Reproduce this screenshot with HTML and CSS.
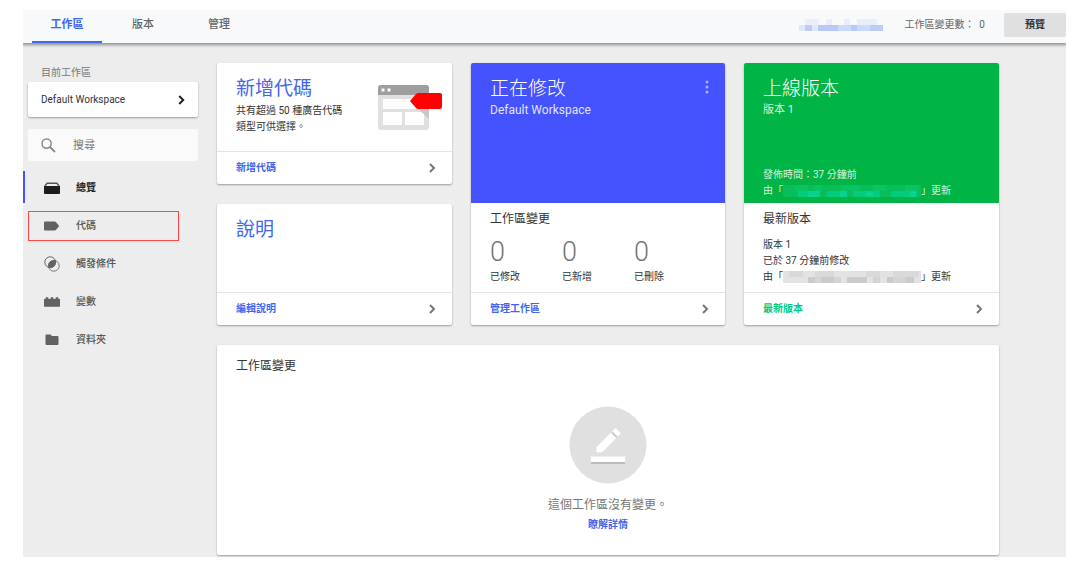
FILE: index.html
```html
<!DOCTYPE html>
<html lang="zh-Hant">
<head>
<meta charset="utf-8">
<meta name="viewport" content="width=device-width, initial-scale=1">
<title>工作區</title>
<link rel="stylesheet" href="styles.css">
</head>
<body>
<div class="app">
  <header class="topbar">
    <nav class="tabs">
      <a class="tab tab-active" href="#">工作區</a>
      <a class="tab" href="#">版本</a>
      <a class="tab" href="#">管理</a>
    </nav>
    <div class="topbar-info">
      <svg class="masked-id" width="86" height="18" viewBox="0 0 86 18" aria-hidden="true" shape-rendering="crispEdges">
        <path fill="#e9eefb" d="M6 3h14v6H6zM27 3h6v6h-6zM45 3h6v6h-6zM58 3h20v6H58z"/>
        <path fill="#dfe7fb" d="M0 9h84v6H0z"/>
        <path fill="#becbf4" d="M6 9h7v6H6zM71 9h13v6H71z"/>
        <path fill="#b9c8fa" d="M19 9h20v6H19zM52 9h6v6h-6z"/>
        <path fill="#c8daff" d="M39 9h13v6H39zM58 9h13v6H58z"/>
      </svg>
      <span class="change-count">工作區變更數：&nbsp; 0</span>
      <button class="preview" type="button">預覽</button>
    </div>
  </header>

  <div class="body">
    <aside class="sidebar">
      <div class="side-label">目前工作區</div>
      <button class="workspace" type="button">
        <span>Default Workspace</span>
        <svg width="7" height="10" viewBox="0 0 7 10" aria-hidden="true"><path d="M1.2 1l4 4-4 4" fill="none" stroke="#222" stroke-width="2"/></svg>
      </button>
      <label class="search">
        <svg width="15" height="15" viewBox="0 0 15 15" aria-hidden="true"><circle cx="5.6" cy="5.6" r="4.6" fill="none" stroke="#8a8a8a" stroke-width="1.5"/><path d="M9 9l5 5" stroke="#8a8a8a" stroke-width="1.8"/></svg>
        <input type="search" placeholder="搜尋" aria-label="搜尋">
      </label>
      <nav class="menu">
        <a class="item item-active" href="#">
          <svg width="16" height="14" viewBox="0 0 16 14" aria-hidden="true"><path d="M0 5h16v7a1 1 0 0 1-1 1H1a1 1 0 0 1-1-1z" fill="#1c1c1c"/><path d="M1 5l2-2.700h10L15 5" fill="none" stroke="#555" stroke-width="1.400"/></svg>
          <span>總覽</span>
        </a>
        <a class="item item-marked" href="#">
          <svg width="16" height="14" viewBox="0 0 16 14" aria-hidden="true"><path d="M1 2.500h9.500a2 2 0 0 1 1.600.8L15.200 7l-3.100 3.700a2 2 0 0 1-1.600.8H1a1 1 0 0 1-1-1v-7a1 1 0 0 1 1-1z" fill="#626262"/></svg>
          <span>代碼</span>
        </a>
        <a class="item" href="#">
          <svg width="16" height="16" viewBox="0 0 16 16" aria-hidden="true"><circle cx="6.200" cy="6.200" r="5.400" fill="none" stroke="#626262"/><circle cx="9.800" cy="9.800" r="5.400" fill="none" stroke="#777"/><path d="M11.500 4.600A5.400 5.400 0 0 0 4.600 11.500 5.400 5.400 0 0 0 11.500 4.600z" fill="#626262"/></svg>
          <span>觸發條件</span>
        </a>
        <a class="item" href="#">
          <svg width="16" height="14" viewBox="0 0 16 14" aria-hidden="true"><path d="M0 4h1.500V3q0-.7.700-.7h1.600q.7 0 .7.700v1h2V3q0-.7.700-.7h1.600q.7 0 .7.700v1h2V3q0-.7.700-.7h1.600q.7 0 .7.700v1H16v7a.7.7 0 0 1-.7.700H.7A.7.700 0 0 1 0 11z" fill="#626262"/></svg>
          <span>變數</span>
        </a>
        <a class="item" href="#">
          <svg width="16" height="14" viewBox="0 0 16 14" aria-hidden="true"><path d="M2.500 1.500h4L8 3h5.500a1 1 0 0 1 1 1v7a1 1 0 0 1-1 1h-11a1 1 0 0 1-1-1V2.500a1 1 0 0 1 1-1z" fill="#626262"/></svg>
          <span>資料夾</span>
        </a>
      </nav>
    </aside>

    <main class="cards">
      <section class="card">
        <div class="card-main with-art">
          <div>
            <h2 class="title">新增代碼</h2>
            <p class="copy">共有超過 50 種廣告代碼<br>類型可供選擇。</p>
          </div>
          <svg class="art" width="64" height="46" viewBox="0 0 64 46" aria-hidden="true">
            <rect y="1" width="51" height="45" rx="3" fill="#e0e0e0"/>
            <path d="M0 11V4a3 3 0 0 1 3-3h45a3 3 0 0 1 3 3v7z" fill="#9e9e9e"/>
            <path d="M3.500 4.500h3v3h-3zM9.500 4.500h3v3h-3zM5 15h41v10H5zM5 28h19v13H5zM27 28h19v13H27z" fill="#fff"/>
            <path d="M38 23l13 12V21z" fill="#c7c7c7"/>
            <path d="M32 17l6-7q1-1 2.500-1H62q2 0 2 2v12q0 2-2 2H40.500q-1.500 0-2.500-1z" fill="#f00"/>
          </svg>
        </div>
        <a class="foot" href="#"><span>新增代碼</span><svg class="chev" width="7" height="10" viewBox="0 0 7 10" aria-hidden="true"><path d="M1 1l4 4-4 4"/></svg></a>
      </section>

      <section class="card tall">
        <div class="banner banner-blue">
          <div>
            <h2 class="title">正在修改</h2>
            <p class="subtitle">Default Workspace</p>
          </div>
          <button class="more" type="button" aria-label="更多">
            <svg width="4" height="14" viewBox="0 0 4 14" aria-hidden="true"><circle cx="2" cy="2" r="1.500"/><circle cx="2" cy="7" r="1.500"/><circle cx="2" cy="12" r="1.500"/></svg>
          </button>
        </div>
        <div class="details">
          <h3 class="heading">工作區變更</h3>
          <dl class="stats">
            <div class="stat"><dt>已修改</dt><dd>0</dd></div>
            <div class="stat"><dt>已新增</dt><dd>0</dd></div>
            <div class="stat"><dt>已刪除</dt><dd>0</dd></div>
          </dl>
        </div>
        <a class="foot" href="#"><span>管理工作區</span><svg class="chev" width="7" height="10" viewBox="0 0 7 10" aria-hidden="true"><path d="M1 1l4 4-4 4"/></svg></a>
      </section>

      <section class="card tall">
        <div class="banner banner-green">
          <div>
            <h2 class="title">上線版本</h2>
            <p class="subtitle">版本 1</p>
          </div>
          <p class="published">發佈時間：37 分鐘前<br>由「<svg class="masked" width="138" height="12" viewBox="0 0 138 12" aria-hidden="true" shape-rendering="crispEdges">
            <path fill="#0abd5b" d="M0 0h138v12H0z"/>
            <path fill="#09c466" d="M12 0h13v6H12zM31 0h7v6h-7zM58 0h19v6H58zM90 0h13v6H90zM122 0h13v6h-13z"/>
            <path fill="#05cb7c" d="M15 6h22v6H15zM44 6h20v6H44zM70 6h27v6H70zM108 6h26v6h-26z"/>
            <path fill="#08d38d" d="M25 6h12v6H25zM57 6h7v6h-7zM83 6h7v6h-7zM127 6h6v6h-6z"/>
          </svg>」更新</p>
        </div>
        <div class="details">
          <h3 class="heading">最新版本</h3>
          <p class="copy latest">版本 1<br>已於 37 分鐘前修改<br>由「<svg class="masked" width="138" height="12" viewBox="0 0 138 12" aria-hidden="true" shape-rendering="crispEdges">
            <path fill="#e3e3e3" d="M0 0h138v12H0z"/>
            <path fill="#d9d9d9" d="M6 0h14v6H6zM32 0h19v6H32zM83 0h14v6H83zM110 0h26v6h-26z"/>
            <path fill="#cbcbcb" d="M25 6h7v6h-7zM38 6h13v6H38zM64 6h20v6H64zM104 6h6v6h-6zM123 6h8v6h-8z"/>
            <path fill="#d4d4d4" d="M32 6h6v6h-6zM51 6h7v6h-7zM90 6h7v6h-7zM110 6h13v6h-13z"/>
          </svg>」更新</p>
        </div>
        <a class="foot foot-green" href="#"><span>最新版本</span><svg class="chev" width="7" height="10" viewBox="0 0 7 10" aria-hidden="true"><path d="M1 1l4 4-4 4"/></svg></a>
      </section>

      <section class="card">
        <div class="card-main"><h2 class="title">說明</h2></div>
        <a class="foot" href="#"><span>編輯說明</span><svg class="chev" width="7" height="10" viewBox="0 0 7 10" aria-hidden="true"><path d="M1 1l4 4-4 4"/></svg></a>
      </section>

      <section class="card wide">
        <h3 class="heading">工作區變更</h3>
        <div class="empty">
          <svg width="78" height="78" viewBox="0 0 78 78" aria-hidden="true">
            <circle cx="39" cy="39" r="38.500" fill="#e0e0e0"/>
            <g fill="#bdbdbd"><path d="M22 52h34v6H22z"/><path d="M28 41l15-15 5 5-15 15.500h-5z"/><path d="M45 25l3-2 4 4-2.500 3z"/></g>
            <g fill="#fff"><path d="M22 50.500h34v5.500H22z"/><path d="M27.500 41l14.500-14.500 5.500 5.500L33 46.500h-5.500z"/><path d="M43.500 25l2.200-2.200q1-1 2 0l3.500 3.500q1 1 0 2L49 30.500z"/></g>
          </svg>
          <p class="empty-text">這個工作區沒有變更。</p>
          <a class="learn" href="#">瞭解詳情</a>
        </div>
      </section>
    </main>
  </div>
</div>
</body>
</html>
```

FILE: styles.css
```css
* {
  box-sizing: border-box;
}

body {
  margin: 0;
  padding: 10px 21px 21px 23px;
  background: #fff;
  color: #333;
  font: 10px/16px Roboto, "Noto Sans CJK TC", sans-serif;
}

h2, h3, p, dl, dd {
  margin: 0;
  font-weight: 400;
}

a {
  color: inherit;
  text-decoration: none;
}

button, input {
  border: 0;
  font: inherit;
  color: inherit;
}

svg {
  display: block;
  flex: none;
}

.app {
  background: #ededed;
}

/* Top bar */
.topbar {
  position: relative;
  display: flex;
  justify-content: space-between;
  background: #f8f9fb;
  box-shadow: 0 1px 3px 1px rgba(0, 0, 0, .4);
  clip-path: inset(0 0 -6px 0);
}

.tabs {
  display: flex;
  padding-left: 9px;
}

.tab {
  display: flex;
  justify-content: center;
  min-width: 70px;
  margin-right: 6px;
  padding: 7px 17px 8px;
  border-bottom: 2px solid transparent;
  color: #666;
  font-size: 11px;
  font-weight: 500;
}

.tab-active {
  border-color: #4267f5;
  color: #4065ed;
  font-weight: 700;
}

.topbar-info {
  display: flex;
  align-items: center;
  color: #666;
  padding-bottom: 4px;
}

.change-count {
  margin: 0 19px;
}

.preview {
  width: 62px;
  height: 24px;
  padding: 0;
  border-radius: 2px;
  background: #e0e0e0;
  color: #333;
  font-weight: 700;
}

.body {
  display: flex;
}

/* Sidebar */
.sidebar {
  flex: 0 0 194px;
  padding-top: 22px;
}

.side-label {
  padding-left: 18px;
  color: #777;
}

.workspace {
  display: flex;
  align-items: center;
  justify-content: space-between;
  width: 170px;
  height: 35px;
  margin: 1px 0 12px 5px;
  padding: 0 13px;
  border-radius: 2px;
  background: #fff;
  box-shadow: 0 1px 2px rgba(0, 0, 0, .35);
}

.search {
  display: flex;
  align-items: center;
  gap: 17px;
  width: 170px;
  height: 32px;
  margin-left: 5px;
  padding: 0 13px;
  border-radius: 2px;
  background: #fafafa;
  color: #777;
}

.search input {
  width: 100%;
  padding: 2px 0 0;
  outline: 0;
  background: transparent;
  font-size: 11px;
}

.search input::placeholder {
  color: #777;
}

.menu {
  display: grid;
  gap: 6px;
  padding-top: 10px;
}

.item {
  display: flex;
  align-items: center;
  gap: 16px;
  height: 32px;
  padding: 2px 0 0 21px;
  color: #555;
  font-weight: 500;
}

.item-active {
  padding-left: 19px;
  border-left: 2px solid #4553ff;
  color: #222;
  font-weight: 700;
}

.item-marked {
  width: 151px;
  height: 30px;
  margin: 2px 0 0 5px;
  padding: 0 0 0 15px;
  border: 1px solid #ff4545;
}

/* Cards */
.cards {
  flex: 1;
  display: grid;
  grid-template-columns: 235fr 254fr 255fr;
  grid-template-rows: auto auto auto;
  gap: 20px 19px;
  padding: 20px 67px 2px 0;
}

.card {
  display: flex;
  flex-direction: column;
  min-width: 0;
  overflow: hidden;
  border-radius: 2px;
  background: #fff;
  box-shadow: 0 1px 2px rgba(0, 0, 0, .35);
}

.tall {
  grid-row: span 2;
}

.wide {
  grid-column: 1 / -1;
  min-height: 210px;
  padding: 12px 19px;
}

.card-main {
  flex: 1;
  min-height: 88px;
  padding: 13px 10px 6px 19px;
  color: #333;
}

.with-art {
  display: flex;
  justify-content: space-between;
}

.art {
  margin-top: 8px;
}

.title {
  font-size: 19px;
  font-weight: 300;
  line-height: 25px;
}

.card-main .title {
  color: #4267ed;
  font-weight: 400;
}

.card-main .copy {
  margin-top: 2px;
}

.foot {
  display: flex;
  align-items: center;
  justify-content: space-between;
  height: 33px;
  padding: 0 16px 0 19px;
  border-top: 1px solid #e4e4e4;
  color: #4267ed;
  font-weight: 700;
}

.foot-green {
  color: #00c981;
}

.chev {
  fill: none;
  stroke: #777;
  stroke-width: 2;
}

.banner {
  display: flex;
  justify-content: space-between;
  min-height: 140px;
  padding: 13px 16px 4px 19px;
  color: #fff;
}

.banner-blue {
  background: #4553ff;
}

.banner-green {
  flex-direction: column;
  background: #00b545;
}

.subtitle {
  color: rgba(255, 255, 255, .85);
  font-size: 12px;
  line-height: 18px;
}

.banner-green .subtitle {
  font-size: 11px;
}

.published {
  color: rgba(255, 255, 255, .85);
}

.more {
  align-self: flex-start;
  margin-top: 4px;
  padding: 0;
  background: none;
  fill: #a9b0ff;
}

.details {
  flex: 1;
  padding: 7px 19px 7px;
}

.heading {
  font-size: 12px;
  line-height: 18px;
}

.stats {
  display: grid;
  grid-template-columns: repeat(3, 72px);
  padding-top: 10px;
}

.stat {
  display: flex;
  flex-direction: column-reverse;
}

.stat dd {
  color: #777;
  font-size: 27px;
  font-weight: 300;
  line-height: 28px;
}

.stat dt {
  padding-top: 3px;
}

.latest {
  padding-top: 9px;
}

.masked {
  display: inline-block;
  vertical-align: -3px;
}

.empty {
  display: flex;
  flex-direction: column;
  align-items: center;
  padding-top: 31px;
}

.empty-text {
  padding-top: 12px;
  color: #777;
  font-size: 12px;
  line-height: 18px;
}

.learn {
  padding-top: 3px;
  color: #4267ed;
  font-weight: 700;
}
```
